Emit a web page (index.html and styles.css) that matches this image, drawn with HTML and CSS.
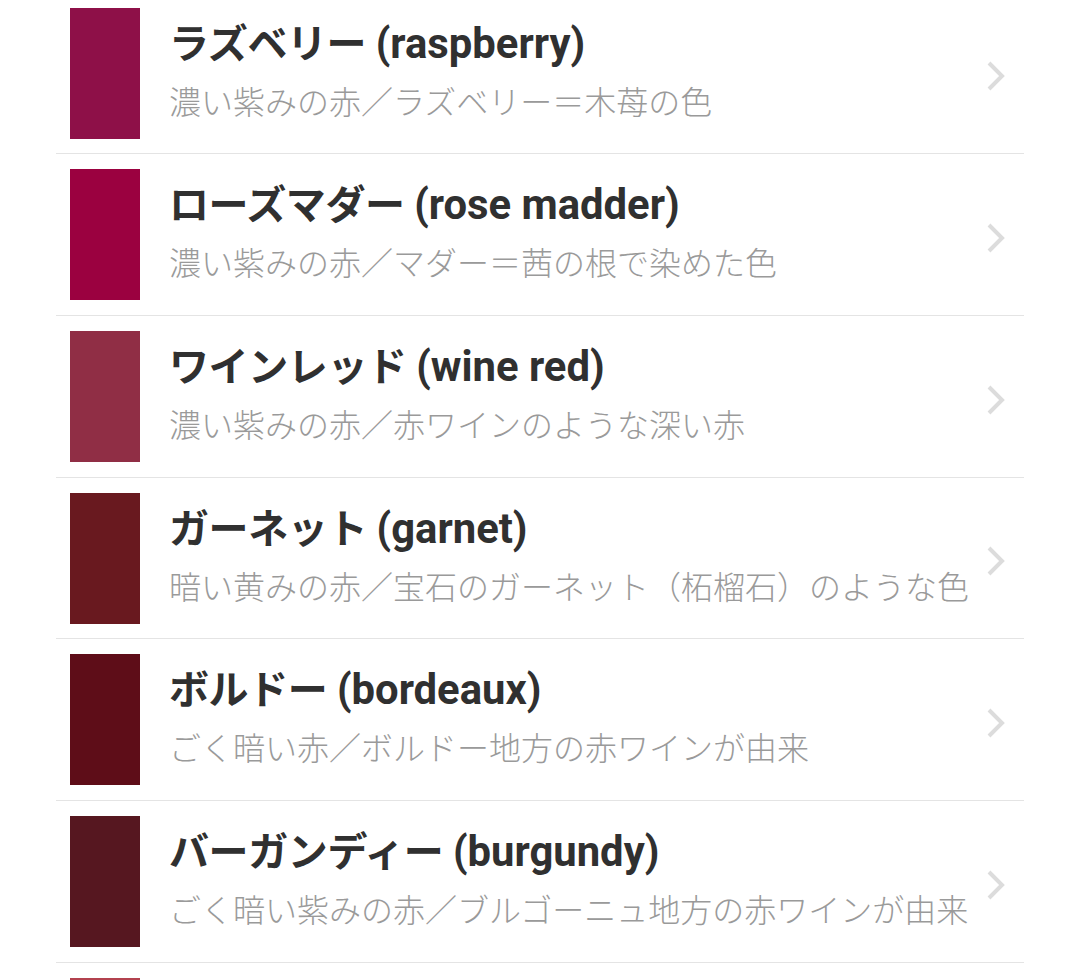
FILE: index.html
```html
<!DOCTYPE html>
<html lang="ja">
<head>
<meta charset="utf-8">
<link rel="stylesheet" href="styles.css">
</head>
<body>
<ul class="list">
  <li class="row">
    <div class="swatch" style="background:#8e1048"></div>
    <div class="text">
      <div class="title">ラズベリー <span class="en">(raspberry)</span></div>
      <div class="sub">濃い紫みの赤／ラズベリー＝木苺の色</div>
    </div>
    <svg class="chev" viewBox="0 0 20 32"><path d="M3 3 L16 16 L3 29"/></svg>
  </li>
  <li class="row">
    <div class="swatch" style="background:#9b0140"></div>
    <div class="text">
      <div class="title">ローズマダー <span class="en">(rose madder)</span></div>
      <div class="sub">濃い紫みの赤／マダー＝茜の根で染めた色</div>
    </div>
    <svg class="chev" viewBox="0 0 20 32"><path d="M3 3 L16 16 L3 29"/></svg>
  </li>
  <li class="row">
    <div class="swatch" style="background:#902e45"></div>
    <div class="text">
      <div class="title">ワインレッド <span class="en">(wine red)</span></div>
      <div class="sub">濃い紫みの赤／赤ワインのような深い赤</div>
    </div>
    <svg class="chev" viewBox="0 0 20 32"><path d="M3 3 L16 16 L3 29"/></svg>
  </li>
  <li class="row">
    <div class="swatch" style="background:#69191f"></div>
    <div class="text">
      <div class="title">ガーネット <span class="en">(garnet)</span></div>
      <div class="sub">暗い黄みの赤／宝石のガーネット（柘榴石）のような色</div>
    </div>
    <svg class="chev" viewBox="0 0 20 32"><path d="M3 3 L16 16 L3 29"/></svg>
  </li>
  <li class="row">
    <div class="swatch" style="background:#5e0d18"></div>
    <div class="text">
      <div class="title">ボルドー <span class="en">(bordeaux)</span></div>
      <div class="sub">ごく暗い赤／ボルドー地方の赤ワインが由来</div>
    </div>
    <svg class="chev" viewBox="0 0 20 32"><path d="M3 3 L16 16 L3 29"/></svg>
  </li>
  <li class="row">
    <div class="swatch" style="background:#561720"></div>
    <div class="text">
      <div class="title">バーガンディー <span class="en">(burgundy)</span></div>
      <div class="sub">ごく暗い紫みの赤／ブルゴーニュ地方の赤ワインが由来</div>
    </div>
    <svg class="chev" viewBox="0 0 20 32"><path d="M3 3 L16 16 L3 29"/></svg>
  </li>
  <li class="row">
    <div class="swatch" style="background:#b3424f"></div>
  </li>
</ul>
</body>
</html>
```

FILE: styles.css
```css
html, body {
  margin: 0;
  padding: 0;
  background: #ffffff;
  overflow: hidden;
}

body {
  font-family: Roboto, "Noto Sans CJK JP", sans-serif;
}

.list {
  list-style: none;
  margin: -7.3px 0 0 56px;
  padding: 0;
  width: 968px;
}

.row {
  display: flex;
  align-items: center;
  padding: 15px 0 14.7px 14px;
  border-bottom: 1px solid #e4e4e4;
}

.swatch {
  flex: 0 0 70px;
  height: 131px;
}

.text {
  flex: 1;
  margin-left: 29px;
  display: flex;
  flex-direction: column;
  gap: 14px;
  margin-top: -2px;
}

.title {
  font-size: 40px;
  font-weight: 700;
  color: #303030;
  line-height: 46px;
  letter-spacing: -0.4px;
  white-space: nowrap;
}

.en {
  font-size: 41.8px;
  letter-spacing: 0;
}

.sub {
  font-size: 32px;
  font-weight: 300;
  color: #9a9a9a;
  line-height: 42px;
  white-space: nowrap;
}

.chev {
  width: 20px;
  height: 32px;
  margin-right: 18px;
  margin-top: 6px;
  flex: 0 0 20px;
}

.chev path {
  fill: none;
  stroke: #dcdcdc;
  stroke-width: 4;
}
```
